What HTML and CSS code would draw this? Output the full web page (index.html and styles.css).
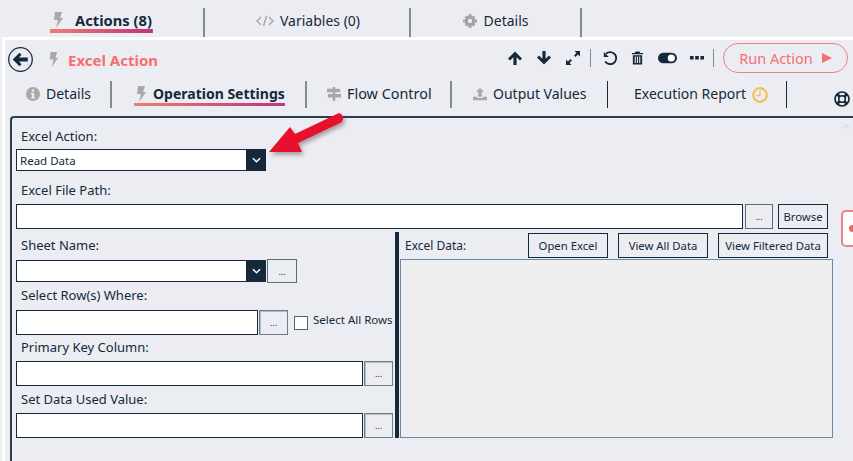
FILE: index.html
```html
<!DOCTYPE html>
<html lang="en">

<head>
    <meta charset="UTF-8">
    <meta name="viewport" content="width=device-width, initial-scale=1.0">
    <title>Excel Action</title>
    <link rel="stylesheet" href="styles.css">
</head>

<body>

    <div class="topTabs">
        <div class="topTab first">
            <span class="tabLabel active">
                <svg class="ico bolt" viewBox="0 0 12 16"><path d="M3 0h7L8 6h3L4 16l2-8H2z"/></svg>
                <b>Actions (8)</b>
            </span>
        </div>
        <div class="topTab second">
            <span class="tabLabel">
                <svg class="ico code" viewBox="0 0 18 12"><path d="M5 2 1 6l4 4M13 2l4 4-4 4M10.500 1 7.500 11"/></svg>
                Variables (0)
            </span>
        </div>
        <div class="topTab third">
            <span class="tabLabel">
                <svg class="ico gear" viewBox="0 0 14 14"><circle cx="7" cy="7" r="3.800" fill="none" stroke="#a0a0a0" stroke-width="3.200"/><path d="M5.500 0h3v3h-3zM5.500 11h3v3h-3zM0 5.500h3v3H0zM11 5.500h3v3h-3zM1.500 3.500l2-2 2 2-2 2zM8.500 3.500l2-2 2 2-2 2zM1.500 10.500l2-2 2 2-2 2zM8.500 10.500l2-2 2 2-2 2z"/></svg>
                Details
            </span>
        </div>
    </div>

    <div class="panel">
        <div class="actionHead">
            <svg class="backBtn" viewBox="0 0 24 24"><circle cx="12" cy="12" r="11.300" fill="none" stroke="#14293a" stroke-width="1.200"/><path d="M4.500 12 11 5.500l2 2L10.500 10H19v4h-8.500l2.500 2.500-2 2z" fill="#14293a"/></svg>
            <svg class="ico boltSmall" viewBox="0 0 12 16"><path d="M3 0h7L8 6h3L4 16l2-8H2z"/></svg>
            <span class="title">Excel Action</span>
            <div class="toolbar">
                <svg class="tool up" viewBox="0 0 14 14"><path d="M7 .5 14 7.500 12 9.500 8.600 6.200V14H5.400V6.200L2 9.500 0 7.500z"/></svg>
                <svg class="tool down" viewBox="0 0 14 14"><path d="M7 13.500 14 6.500 12 4.500 8.600 7.800V0H5.400v7.800L2 4.500 0 6.500z"/></svg>
                <svg class="tool expand" viewBox="0 0 14 14"><path d="M8.500 0H14v5.500l-2-2-2.500 2.500-1.500-1.500L10.500 2zM5.500 14H0V8.500l2 2L4.500 8 6 9.500 3.500 12z"/></svg>
                <i class="toolSep"></i>
                <svg class="tool undo" viewBox="0 0 14 14"><path d="M3 2.800A6 6 0 1 1 2.200 10.500" fill="none" stroke="#14293a" stroke-width="1.900"/><path d="M.8 1v5h5z" fill="#14293a"/></svg>
                <svg class="tool trash" viewBox="0 0 14 14"><path d="M5 0h4l1 1.500h3V3H1V1.500h3zM2 4h10v10H2zM4 5.500v7h1.200v-7zM6.400 5.500v7h1.200v-7zM8.800 5.500v7H10v-7z" fill-rule="evenodd"/></svg>
                <svg class="tool toggle" viewBox="0 0 20 12"><rect width="20" height="11" y=".5" rx="5.500"/><circle cx="14" cy="6" r="3.800" fill="#fff"/></svg>
                <svg class="tool dots" viewBox="0 0 14 4"><path d="M0 0h3.600v3.600H0zM5.200 0h3.600v3.600H5.200zM10.400 0H14v3.600h-3.600z"/></svg>
                <i class="toolSep last"></i>
                <button class="runBtn">Run Action <svg viewBox="0 0 10 10"><path d="M0 0 10 5 0 10z"/></svg></button>
            </div>
        </div>

        <div class="subTabs">
            <div class="subTab s1">
                <svg class="ico" viewBox="0 0 14 14"><path fill-rule="evenodd" d="M7 0a7 7 0 1 1 0 14A7 7 0 0 1 7 0zM5.800 2.500v2.200h2.400V2.500zM5 6v1.300h.9v3H5v1.200h4v-1.200h-.8V6z"/></svg>
                Details
            </div>
            <div class="subTab s2">
                <span class="subLabel active">
                    <svg class="ico" viewBox="0 0 12 16"><path d="M3 0h7L8 6h3L4 16l2-8H2z"/></svg>
                    <b>Operation Settings</b>
                </span>
            </div>
            <div class="subTab s3">
                <svg class="ico" viewBox="0 0 16 16"><path d="M6.500 0h3v2H15v4H9.500v2H16v4H9.500v4h-3v-4H1V8h5.500V6H0V2h6.500z"/></svg>
                <span class="flowText">Flow Control</span>
            </div>
            <div class="subTab s4">
                <svg class="ico" viewBox="0 0 16 14"><path d="M8 0l4.500 4.500H10V10H6V4.500H3.500zM0 10h4.500v1.500h7V10H16v4H0z"/></svg>
                Output Values
            </div>
            <div class="subTab s5">
                <span class="report">Execution Report</span>
                <svg class="clock" viewBox="0 0 16 16"><circle cx="8" cy="8" r="6.800" fill="none" stroke="#f6bd60" stroke-width="2.200"/><path d="M8 3.500V8.500H4" fill="none" stroke="#f6bd60" stroke-width="1.400"/></svg>
            </div>
            <svg class="lifebuoy" viewBox="0 0 16 16"><g fill="none" stroke="#14293a"><circle cx="8" cy="8" r="7" stroke-width="1.700"/><circle cx="8" cy="8" r="3.300" stroke-width="1.600"/><path d="M3 3l2.500 2.500M13 3l-2.500 2.500M3 13l2.500-2.500M13 13l-2.500-2.500" stroke-width="2.600"/></g></svg>
        </div>

        <div class="content">
            <svg class="scrollUp" viewBox="0 0 10 6"><path d="M1 5l4-4 4 4" fill="none" stroke="#dcdde2" stroke-width="1.300"/></svg>

            <label class="lbl">Excel Action:</label>
            <div class="combo actionCombo">
                <span class="comboVal">Read Data</span>
                <span class="comboBtn"><svg viewBox="0 0 10 6"><path d="M1 1l4 4 4-4" fill="none" stroke="#fff" stroke-width="1.600"/></svg></span>
            </div>

            <label class="lbl pathLbl">Excel File Path:</label>
            <div class="pathRow">
                <div class="field grow"></div>
                <button class="dotBtn pathDots">...</button>
                <button class="btn browse">Browse</button>
            </div>

            <div class="split">
                <div class="leftCol">
                    <label class="lbl sheetLbl">Sheet Name:</label>
                    <div class="row">
                        <div class="combo sheetCombo">
                            <span class="comboVal"></span>
                            <span class="comboBtn"><svg viewBox="0 0 10 6"><path d="M1 1l4 4 4-4" fill="none" stroke="#fff" stroke-width="1.600"/></svg></span>
                        </div>
                        <button class="dotBtn sheetDots">...</button>
                    </div>

                    <label class="lbl whereLbl">Select Row(s) Where:</label>
                    <div class="row whereRow">
                        <div class="field whereField"></div>
                        <button class="dotBtn">...</button>
                        <span class="check"></span>
                        <span class="checkLbl">Select All Rows</span>
                    </div>

                    <label class="lbl keyLbl">Primary Key Column:</label>
                    <div class="row fieldRow">
                        <div class="field grow"></div>
                        <button class="dotBtn">...</button>
                    </div>

                    <label class="lbl usedLbl">Set Data Used Value:</label>
                    <div class="row fieldRow">
                        <div class="field grow"></div>
                        <button class="dotBtn">...</button>
                    </div>
                </div>

                <div class="splitter"></div>

                <div class="rightCol">
                    <div class="dataHead">
                        <span class="dataLbl">Excel Data:</span>
                        <button class="btn openBtn">Open Excel</button>
                        <button class="btn allBtn">View All Data</button>
                        <button class="btn filterBtn">View Filtered Data</button>
                    </div>
                    <div class="dataBox"></div>
                </div>
            </div>
        </div>
    </div>

    <!-- annotation on top of the screenshot -->
    <svg class="arrow" viewBox="0 0 80 44">
        <path d="M1 40 22 15l5 7L70 1.500c4-1.500 8 6.500 2 9.500L30 31l4 9z"/>
    </svg>

    <div class="sideTab"><i></i></div>

</body>

</html>
```

FILE: styles.css
```css
* {
    margin: 0;
    padding: 0;
    box-sizing: border-box;
}

html,
body {
    width: 100%;
    height: 100%;
    overflow: hidden;
    background-color: #ecedf3;
    color: #14293a;
    font-family: "Noto Sans", Arial, sans-serif;
    font-size: 14px;
}

svg {
    display: block;
    flex: none;
}

button {
    font-family: inherit;
    color: inherit;
    background: none;
    cursor: pointer;
}

/* top tabs */
.topTabs {
    display: flex;
    height: 37px;
    padding-top: 8px;
}

.topTab {
    display: flex;
    justify-content: center;
    height: 29px;
    border-right: 2px solid #7f8c96;
}

.topTab.first {
    width: 205px;
}

.topTab.second {
    width: 206px;
}

.topTab.third {
    width: 171px;
}

.tabLabel {
    display: flex;
    align-items: flex-start;
    height: 25px;
    padding-top: 3px;
    gap: 7px;
    font-size: 14px;
    line-height: 20px;
}

.tabLabel.active {
    gap: 9px;
    padding-top: 2px;
    padding-right: 1px;
    font-size: 14.700px;
    background: linear-gradient(90deg, #e9806e, #c5307f) bottom / 100% 4px no-repeat;
}

.ico {
    fill: #a8a8a8;
    width: 16px;
    height: 16px;
    margin-top: 2px;
}

.ico.code {
    fill: none;
    stroke: #a8a8a8;
    stroke-width: 1.400;
    width: 18px;
    margin-left: 2px;
    margin-right: -1px;
}

.ico.gear {
    width: 14px;
}

/* panel under the top tabs */
.panel {
    margin-left: 2px;
    border-top: 3px solid #fff;
    border-left: 3px solid #fff;
    height: 424px;
}

.actionHead {
    display: flex;
    align-items: center;
    height: 37px;
    padding: 2px 5px 0 3px;
}

.backBtn {
    width: 25px;
    height: 25px;
}

.boltSmall {
    width: 13px;
    height: 15px;
    margin: 0 0 0 14px;
}

.title {
    margin-left: 8px;
    color: #f76e6e;
    font-size: 15px;
    font-weight: 700;
}

.toolbar {
    display: flex;
    align-items: center;
    margin: -3px 0 0 auto;
}

.tool {
    fill: #14293a;
    width: 14px;
    height: 14px;
    margin-right: 15px;
}

.tool.up {
    margin-left: 1px;
}

.tool.toggle {
    width: 19px;
    height: 12px;
    margin-right: 13px;
}

.tool.dots {
    height: 4px;
    margin-right: 9px;
}

.tool.trash {
    width: 13px;
    margin-right: 14px;
}

.tool.undo {
    margin-right: 14px;
}

.tool.expand {
    margin-right: 10px;
}

.toolSep {
    width: 1px;
    height: 18px;
    margin-right: 12px;
    background-color: #7f8c96;
}

.toolSep.last {
    margin-right: 9px;
}

.runBtn {
    display: flex;
    align-items: center;
    justify-content: center;
    gap: 9px;
    width: 125px;
    height: 30px;
    border: 1px solid #f08080;
    border-radius: 15px;
    color: #f76e6e;
    font-size: 14.500px;
}

.runBtn svg {
    width: 10px;
    height: 10px;
    fill: #f76e6e;
}

/* operation tabs */
.subTabs {
    position: relative;
    display: flex;
    height: 39px;
    padding-top: 4px;
}

.subTab {
    display: flex;
    align-items: flex-start;
    gap: 6px;
    height: 27px;
    padding-top: 3px;
    line-height: 20px;
    border-right: 2px solid #7f8c96;
}

.subTab .ico {
    width: 14px;
    height: 14px;
    margin-top: 3px;
}

.subTab.s1 {
    width: 107px;
    padding-left: 21px;
}

.subTab.s2 {
    width: 195px;
    padding-left: 22px;
    padding-top: 0;
}

.subTab.s3 {
    width: 145px;
    padding-left: 20px;
}

.subTab.s4 {
    width: 156px;
    padding-left: 21px;
    border-right: 1px solid #14293a;
}

.subTab.s5 {
    width: 179px;
    padding-left: 26px;
    border-right: 1px solid #14293a;
}

.flowText {
    font-size: 14.400px;
}

.subLabel {
    display: flex;
    gap: 5px;
    height: 25px;
    padding-top: 3px;
}

.subLabel.active {
    background: linear-gradient(90deg, #e9806e, #c5307f) bottom / 100% 3px no-repeat;
}

.subLabel .ico {
    width: 14px;
    height: 16px;
    margin-top: 2px;
}

.clock {
    width: 16px;
    height: 16px;
    margin-top: 3px;
}

.lifebuoy {
    position: absolute;
    top: 14px;
    right: 3px;
    width: 16px;
    height: 16px;
}

/* form */
.content {
    position: relative;
    margin: 0 -10px 0 5px;
    padding: 10px 0 0 4px;
    height: 360px;
    border-top: 2px solid #2b3f4e;
    border-left: 2px solid #2b3f4e;
    border-top-left-radius: 4px;
}

.scrollUp {
    position: absolute;
    top: 6px;
    right: 12px;
    width: 10px;
    height: 6px;
}

.lbl {
    display: block;
    padding-left: 5px;
    font-size: 13px;
    line-height: 16px;
}

.combo {
    display: flex;
    width: 250px;
    height: 22px;
    background-color: #fff;
    border: 1px solid #14293a;
}

.actionCombo {
    margin-top: 5px;
}

.sheetCombo {
    margin-top: 7px;
}

.comboVal {
    flex: 1;
    padding-left: 3px;
    font-size: 11.500px;
    line-height: 21px;
}

.comboBtn {
    display: flex;
    align-items: center;
    justify-content: center;
    width: 20px;
    margin: -1px;
    background-color: #14293a;
}

.comboBtn svg {
    width: 9px;
    height: 6px;
}

.pathLbl {
    margin-top: 11px;
}

.pathRow {
    display: flex;
    width: 812px;
    height: 25px;
    margin-top: 6px;
}

.field {
    height: 25px;
    background-color: #fff;
    border: 1px solid #14293a;
}

.field.grow {
    flex: 1;
}

.dotBtn {
    flex: none;
    width: 29px;
    height: 25px;
    margin-left: 1px;
    border: 1px solid #6f7e89;
    box-shadow: inset 1px 1px 0 #b5bcc3;
    font-size: 9px;
}

.pathDots {
    width: 28px;
    margin-left: 2px;
    border-color: #5d6c78;
    box-shadow: none;
}

.btn {
    flex: none;
    height: 25px;
    border: 1px solid #14293a;
    font-size: 11.300px;
}

.browse {
    width: 50px;
    margin-left: 5px;
}

.split {
    display: flex;
    margin-top: 3px;
    width: 817px;
}

.leftCol {
    width: 377px;
}

.row {
    display: flex;
    align-items: flex-start;
}

.sheetLbl {
    margin-top: 5px;
}

.sheetDots {
    width: 30px;
    height: 24px;
    margin: 6px 0 0 1px;
    border-color: #5d6c78;
    box-shadow: none;
}

.whereLbl {
    margin-top: 4px;
}

.whereRow .field,
.whereRow .dotBtn {
    margin-top: 7px;
}

.fieldRow .field,
.fieldRow .dotBtn {
    margin-top: 6px;
}

.whereField {
    width: 242px;
}

.check {
    width: 14px;
    height: 14px;
    margin: 13px 0 0 6px;
    background-color: #fff;
    border: 1px solid #55636e;
}

.checkLbl {
    margin: 9px 0 0 5px;
    font-size: 11.500px;
    line-height: 16px;
    white-space: nowrap;
}

.keyLbl {
    margin-top: 4px;
}

.usedLbl {
    margin-top: 5px;
}

.splitter {
    width: 4px;
    height: 206px;
    margin: 0 1px 0 2px;
    background-color: #14293a;
}

.rightCol {
    flex: 1;
    display: flex;
    flex-direction: column;
}

.dataHead {
    display: flex;
    align-items: center;
    height: 27px;
    padding: 0 5px 1px 0;
}

.dataLbl {
    margin: 0 auto 0 5px;
    font-size: 12px;
    padding-top: 1px;
}

.openBtn {
    width: 80px;
}

.allBtn {
    width: 90px;
    margin-left: 10px;
}

.filterBtn {
    width: 110px;
    margin-left: 10px;
}

.dataBox {
    height: 179px;
    background-color: #efefef;
    border: 1px solid #6a88a8;
}

/* things lying over the page */
.arrow {
    position: absolute;
    left: 268px;
    top: 112px;
    width: 80px;
    height: 44px;
    fill: #e8112d;
    filter: drop-shadow(2px 3px 2px rgba(90, 60, 60, .45));
}

.sideTab {
    position: absolute;
    left: 841px;
    top: 210px;
    width: 20px;
    height: 37px;
    background-color: #fff;
    border: 2px solid #e9838c;
    border-radius: 5px;
}

.sideTab i {
    position: absolute;
    left: 6px;
    top: 13px;
    width: 7px;
    height: 7px;
    border-radius: 50%;
    background-color: #e9656f;
}
```
